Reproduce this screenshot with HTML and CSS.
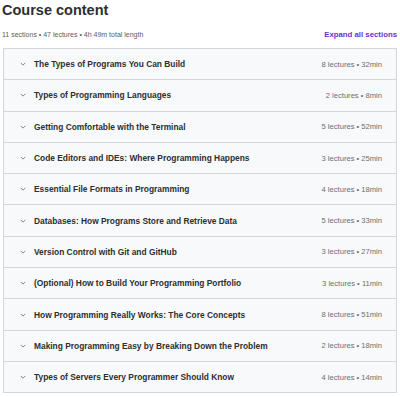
FILE: index.html
```html
<!DOCTYPE html>
<html lang="en">
  <head>
    <meta charset="UTF-8" />
    <meta name="viewport" content="width=device-width, initial-scale=1.0" />
    <title>Course content</title>
    <link rel="stylesheet" href="styles.css">
  </head>
  <body>
    <section class="curriculum">
      <h2 class="curriculum-title">Course content</h2>
      <div class="curriculum-meta">
        <span class="meta-text">11 sections • 47 lectures • 4h 49m total length</span>
        <button class="expand-all">Expand all sections</button>
      </div>
      <div class="section-list">
        <div class="section-row">
          <span class="chevron"><svg viewBox="0 0 8 5" width="6" height="4"><path d="M1 1l3 3 3-3" fill="none" stroke="#6a6f73" stroke-width="1.1"/></svg></span>
          <span class="section-name">The Types of Programs You Can Build</span>
          <span class="section-info">8 lectures • 32min</span>
        </div>
        <div class="section-row">
          <span class="chevron"><svg viewBox="0 0 8 5" width="6" height="4"><path d="M1 1l3 3 3-3" fill="none" stroke="#6a6f73" stroke-width="1.1"/></svg></span>
          <span class="section-name">Types of Programming Languages</span>
          <span class="section-info">2 lectures • 8min</span>
        </div>
        <div class="section-row">
          <span class="chevron"><svg viewBox="0 0 8 5" width="6" height="4"><path d="M1 1l3 3 3-3" fill="none" stroke="#6a6f73" stroke-width="1.1"/></svg></span>
          <span class="section-name">Getting Comfortable with the Terminal</span>
          <span class="section-info">5 lectures • 52min</span>
        </div>
        <div class="section-row">
          <span class="chevron"><svg viewBox="0 0 8 5" width="6" height="4"><path d="M1 1l3 3 3-3" fill="none" stroke="#6a6f73" stroke-width="1.1"/></svg></span>
          <span class="section-name">Code Editors and IDEs: Where Programming Happens</span>
          <span class="section-info">3 lectures • 25min</span>
        </div>
        <div class="section-row">
          <span class="chevron"><svg viewBox="0 0 8 5" width="6" height="4"><path d="M1 1l3 3 3-3" fill="none" stroke="#6a6f73" stroke-width="1.1"/></svg></span>
          <span class="section-name">Essential File Formats in Programming</span>
          <span class="section-info">4 lectures • 18min</span>
        </div>
        <div class="section-row">
          <span class="chevron"><svg viewBox="0 0 8 5" width="6" height="4"><path d="M1 1l3 3 3-3" fill="none" stroke="#6a6f73" stroke-width="1.1"/></svg></span>
          <span class="section-name">Databases: How Programs Store and Retrieve Data</span>
          <span class="section-info">5 lectures • 33min</span>
        </div>
        <div class="section-row">
          <span class="chevron"><svg viewBox="0 0 8 5" width="6" height="4"><path d="M1 1l3 3 3-3" fill="none" stroke="#6a6f73" stroke-width="1.1"/></svg></span>
          <span class="section-name">Version Control with Git and GitHub</span>
          <span class="section-info">3 lectures • 27min</span>
        </div>
        <div class="section-row">
          <span class="chevron"><svg viewBox="0 0 8 5" width="6" height="4"><path d="M1 1l3 3 3-3" fill="none" stroke="#6a6f73" stroke-width="1.1"/></svg></span>
          <span class="section-name">(Optional) How to Build Your Programming Portfolio</span>
          <span class="section-info">3 lectures • 11min</span>
        </div>
        <div class="section-row">
          <span class="chevron"><svg viewBox="0 0 8 5" width="6" height="4"><path d="M1 1l3 3 3-3" fill="none" stroke="#6a6f73" stroke-width="1.1"/></svg></span>
          <span class="section-name">How Programming Really Works: The Core Concepts</span>
          <span class="section-info">8 lectures • 51min</span>
        </div>
        <div class="section-row">
          <span class="chevron"><svg viewBox="0 0 8 5" width="6" height="4"><path d="M1 1l3 3 3-3" fill="none" stroke="#6a6f73" stroke-width="1.1"/></svg></span>
          <span class="section-name">Making Programming Easy by Breaking Down the Problem</span>
          <span class="section-info">2 lectures • 18min</span>
        </div>
        <div class="section-row">
          <span class="chevron"><svg viewBox="0 0 8 5" width="6" height="4"><path d="M1 1l3 3 3-3" fill="none" stroke="#6a6f73" stroke-width="1.1"/></svg></span>
          <span class="section-name">Types of Servers Every Programmer Should Know</span>
          <span class="section-info">4 lectures • 14min</span>
        </div>
      </div>
    </section>
  </body>
</html>
```

FILE: styles.css
```css
body {
  font-family: "Liberation Sans", Arial, sans-serif;
  background-color: #ffffff;
  color: #2d2f31;
  margin: 0;
  padding: 0;
}

.curriculum {
  padding: 0 3px;
}

.curriculum-title {
  font-size: 14.5px;
  font-weight: bold;
  margin: 0 0 0 -1px;
  line-height: 20px;
}

.curriculum-meta {
  display: flex;
  justify-content: space-between;
  align-items: center;
  height: 28px;
}

.meta-text {
  font-size: 7px;
  color: #595c5f;
  margin-left: -1px;
}

.expand-all {
  border: none;
  background: none;
  padding: 0;
  font-family: inherit;
  font-size: 7.8px;
  font-weight: bold;
  color: #6a2fd0;
}

.section-list {
  border: 1px solid #d1d7dc;
  border-bottom: none;
}

.section-row {
  display: flex;
  align-items: center;
  height: 30.3px;
  border-bottom: 1px solid #d1d7dc;
  background: #f7f9fa;
  padding: 0 14px 0 16px;
}

.chevron {
  display: flex;
  width: 6px;
  margin-right: 8px;
}

.section-name {
  flex: 1;
  font-size: 8.4px;
  font-weight: bold;
}

.section-info {
  font-size: 7.6px;
  color: #6a6f73;
}
```
